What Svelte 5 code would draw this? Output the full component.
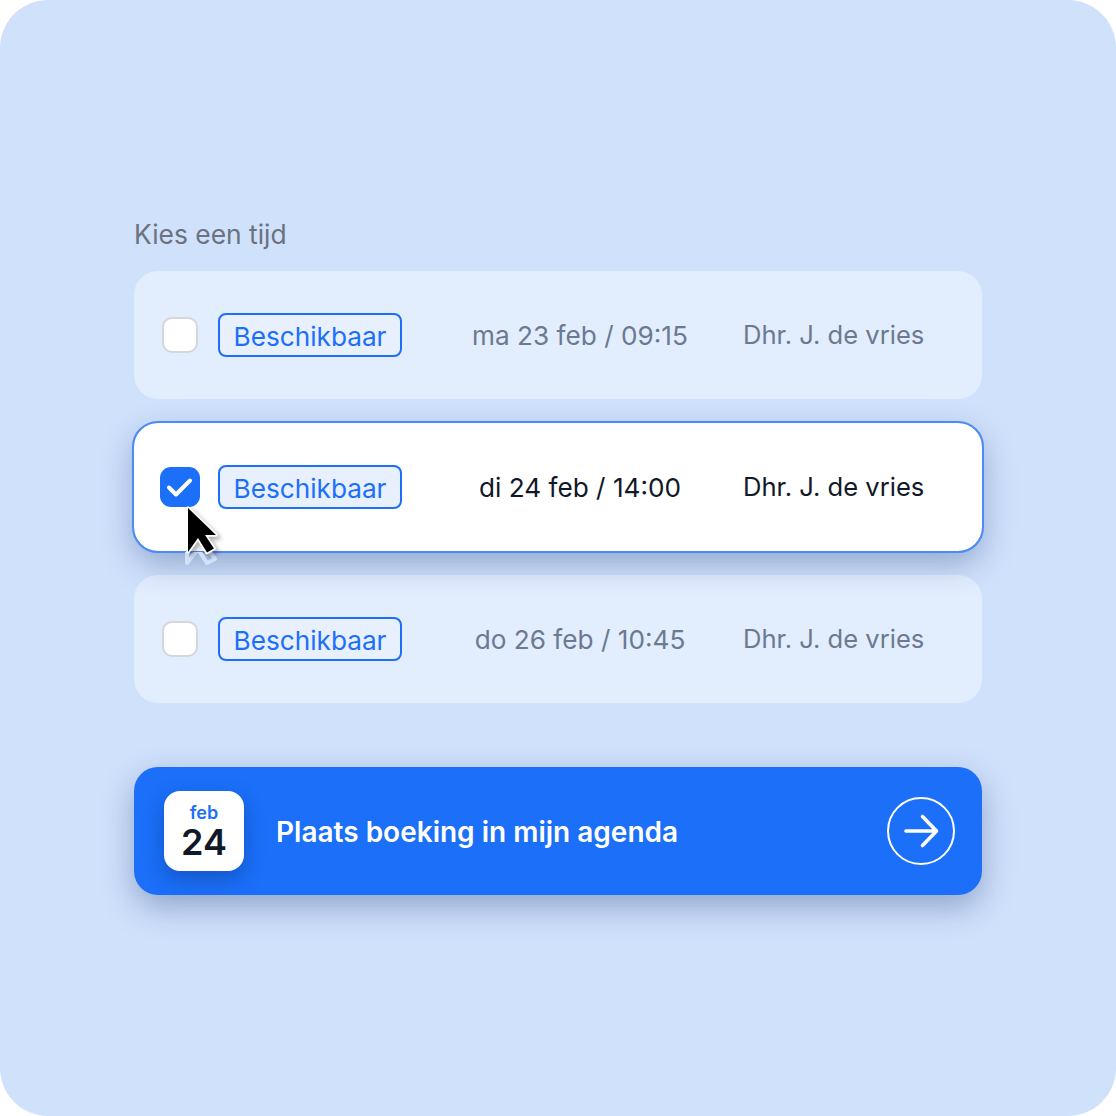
<script>
  const slots = [
    { date: "ma 23 feb / 09:15", selected: false },
    { date: "di 24 feb / 14:00", selected: true },
    { date: "do 26 feb / 10:45", selected: false },
  ];
</script>

<div class="page">
  <div class="panel">
    <p class="title">Kies een tijd</p>

    <div class="slots">
      {#each slots as slot}
        <div class="slot" class:selected={slot.selected}>
          <div class="check-cell">
            {#if slot.selected}
              <span class="check on">
                <svg width="40" height="40" viewBox="0 0 40 40" fill="none">
                  <path d="M9 20.5l7 7L30 13.5" stroke="#fff" stroke-width="4" stroke-linecap="round" stroke-linejoin="round" />
                </svg>
              </span>
            {:else}
              <span class="check"></span>
            {/if}
          </div>
          <span class="badge">Beschikbaar</span>
          <span class="date">{slot.date}</span>
          <span class="doctor">Dhr. J. de vries</span>

          {#if slot.selected}
            <svg class="cursor" width="44" height="68" viewBox="0 0 44 68" fill="none">
              <clipPath id="below-row"><rect x="0" y="49" width="44" height="19" /></clipPath>
              <g clip-path="url(#below-row)">
                <path d="M5 17V60L16 46L25 60L33 56L24 44H35Z" stroke="#d3e2fb" stroke-width="4" stroke-linejoin="round" />
              </g>
              <path class="pointer" d="M6 5V49L16 35L25 49.5L32 45.5L23 32H34Z" />
            </svg>
          {/if}
        </div>
      {/each}
    </div>

    <div class="action">
      <div class="calendar">
        <span class="month">feb</span>
        <span class="day">24</span>
      </div>
      <span class="action-label">Plaats boeking in mijn agenda</span>
      <svg class="arrow" width="70" height="70" viewBox="0 0 70 70" fill="none">
        <circle cx="35" cy="35" r="33" stroke="#fff" stroke-width="2" />
        <path d="M20 35H50M36.5 20.5L50.5 35L36.5 49.5" stroke="#fff" stroke-width="3.6" stroke-linecap="round" stroke-linejoin="round" />
      </svg>
    </div>
  </div>
</div>

<style>
  :global(body) {
    margin: 0;
    background: #fff;
    font-family: Inter, "Liberation Sans", sans-serif;
  }

  .page {
    width: 1116px;
    height: 1116px;
  }

  .panel {
    box-sizing: border-box;
    width: 100%;
    height: 100%;
    padding: 218px 134px 0;
    background: #d0e1fc;
    border-radius: 48px;
  }

  .title {
    margin: 0 0 20px;
    font-size: 26.4px;
    line-height: 33px;
    color: #6b7280;
  }

  .slots {
    display: flex;
    flex-direction: column;
    gap: 24px;
  }

  .slot {
    position: relative;
    box-sizing: border-box;
    height: 128px;
    display: grid;
    grid-template-columns: 84px 184px 341px 1fr;
    align-items: center;
    background: #e2edfe;
    border-radius: 24px;
    font-size: 25.6px;
    color: #6b7a90;
  }

  .slot.selected {
    background: #fff;
    color: #111827;
    outline: 2px solid #4a8bf5;
    box-shadow: 0 12px 32px rgba(30, 60, 120, 0.36);
    z-index: 1;
  }

  .check-cell {
    display: flex;
    justify-content: center;
    padding-left: 8px;
  }

  .check {
    box-sizing: border-box;
    width: 36px;
    height: 36px;
    background: #fff;
    border: 2px solid #d4d6da;
    border-radius: 10px;
  }

  .check.on {
    width: 40px;
    height: 40px;
    background: #1b6ff8;
    border: 0;
    border-radius: 11px;
  }

  .check svg {
    display: block;
  }

  .badge {
    box-sizing: border-box;
    height: 44px;
    padding-top: 2px;
    display: flex;
    align-items: center;
    justify-content: center;
    background: #e8f0fd;
    border: 2px solid #1b6ff8;
    border-radius: 8px;
    color: #1b6ff8;
    font-size: 26.2px;
  }

  .date {
    padding-left: 15px;
    text-align: center;
    font-size: 26.2px;
  }

  .doctor {
    padding-bottom: 1px;
  }

  .cursor {
    position: absolute;
    left: 48px;
    top: 80px;
    overflow: visible;
  }

  .pointer {
    fill: #000;
    stroke: #fff;
    stroke-width: 3.5;
    stroke-linejoin: round;
    paint-order: stroke;
    filter: drop-shadow(3px 3px 2px rgba(0, 0, 0, 0.3));
  }

  .action {
    margin-top: 64px;
    height: 128px;
    display: flex;
    align-items: center;
    padding: 0 26px 0 30px;
    background: #1b6ff8;
    border-radius: 24px;
    box-shadow: 0 12px 32px rgba(30, 60, 120, 0.36);
  }

  .calendar {
    width: 80px;
    height: 80px;
    flex: none;
    display: flex;
    flex-direction: column;
    align-items: center;
    justify-content: center;
    background: #fff;
    border-radius: 16px;
    box-shadow: 0 8px 20px rgba(10, 40, 110, 0.35);
  }

  .month {
    margin-top: 1px;
    font-size: 18px;
    line-height: 20px;
    font-weight: 600;
    color: #1b6ff8;
  }

  .day {
    font-size: 36px;
    line-height: 38px;
    font-weight: 600;
    color: #111827;
  }

  .action-label {
    flex: 1;
    margin-left: 32px;
    padding-top: 2px;
    font-size: 28px;
    font-weight: 600;
    color: #fff;
  }

  .arrow {
    flex: none;
  }
</style>
